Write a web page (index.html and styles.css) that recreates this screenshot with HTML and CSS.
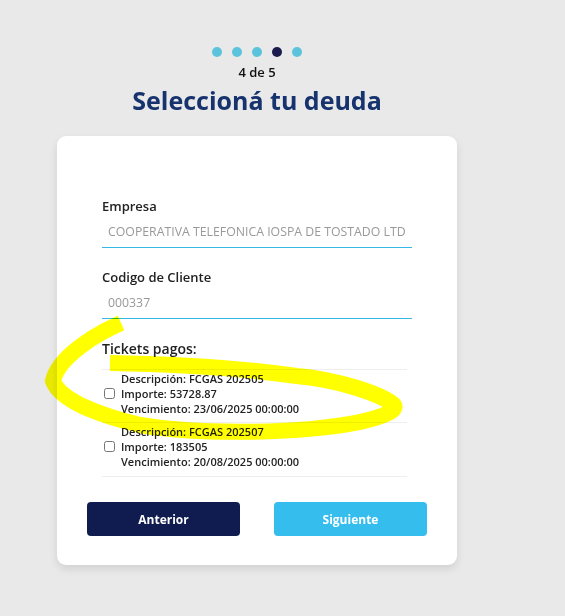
FILE: index.html
```html
<!DOCTYPE html>
<html lang="es">

<head>
  <title>Seleccioná tu deuda</title>
  <link rel="stylesheet" href="styles.css">
</head>

<body>
  <div class="wizard">
    <div class="steps">
      <span class="dot"></span>
      <span class="dot"></span>
      <span class="dot"></span>
      <span class="dot current"></span>
      <span class="dot"></span>
    </div>
    <div class="step-count">4 de 5</div>
    <h1 class="title">Seleccioná tu deuda</h1>

    <div class="card">
      <label class="field">
        <span class="field-label">Empresa</span>
        <input class="field-input" type="text" value="COOPERATIVA TELEFONICA IOSPA DE TOSTADO LTDA" readonly>
      </label>
      <label class="field">
        <span class="field-label">Codigo de Cliente</span>
        <input class="field-input" type="text" value="000337" readonly>
      </label>

      <div class="tickets">
        <div class="tickets-title">Tickets pagos:</div>
        <label class="ticket">
          <input type="checkbox">
          <span class="ticket-info">
            <span>Descripción: FCGAS 202505</span>
            <span>Importe: 53728.87</span>
            <span>Vencimiento: 23/06/2025 00:00:00</span>
          </span>
        </label>
        <label class="ticket">
          <input type="checkbox">
          <span class="ticket-info">
            <span>Descripción: FCGAS 202507</span>
            <span>Importe: 183505</span>
            <span>Vencimiento: 20/08/2025 00:00:00</span>
          </span>
        </label>
      </div>

      <div class="actions">
        <button class="btn btn-back">Anterior</button>
        <button class="btn btn-next">Siguiente</button>
      </div>
    </div>
  </div>

  <!-- highlighter mark drawn over the screenshot -->
  <svg class="highlight" width="565" height="616" viewBox="0 0 565 616">
    <path d="M121,323 C96,334 58,357 53,381 C60,400 98,415 140,425 C200,435 300,434 360,422 C386,416 399,410 393,404 C380,394 340,380 297,376 C240,368 170,364 110,363" />
  </svg>
</body>

</html>
```

FILE: styles.css
```css
html,
body {
  margin: 0;
  height: 100%;
  overflow: hidden;
  background: #e9e9e9;
}

body {
  font-family: "Open Sans", sans-serif;
}

.wizard {
  width: 514px;
  display: flex;
  flex-direction: column;
  align-items: center;
  padding-top: 47px;
}

.steps {
  display: flex;
  gap: 10px;
}

.dot {
  width: 10px;
  height: 10px;
  border-radius: 50%;
  background: #5bc3dc;
}

.dot.current {
  background: #1b1b4f;
}

.step-count {
  margin-top: 6px;
  font-size: 13px;
  font-weight: 600;
  color: #111;
  line-height: 18px;
}

.title {
  margin: 4px 0 0;
  font-size: 25px;
  font-weight: 700;
  color: #17336e;
  line-height: 30px;
}

.card {
  margin-top: 21px;
  width: 310px;
  padding: 61px 45px 29px;
  background: white;
  border-radius: 9px;
  box-shadow: 0 4px 8px #0000001a;
}

.field {
  display: flex;
  flex-direction: column;
  margin-bottom: 20px;
}

.field-label {
  font-size: 13px;
  font-weight: 600;
  color: #222;
  line-height: 18px;
}

.field-input {
  border: none;
  border-bottom: 1px solid #35b8e6;
  padding: 8px 6px 6px;
  font-family: "Open Sans", sans-serif;
  font-size: 12.3px;
  line-height: 18px;
  color: #999;
  outline: none;
  background: transparent;
}

.tickets-title {
  font-size: 14px;
  font-weight: 600;
  color: #222;
  line-height: 20px;
  padding-bottom: 10px;
  margin-right: 5px;
  border-bottom: 1px solid #eee;
}

.ticket {
  display: flex;
  align-items: center;
  padding: 1px 0 6px;
  margin-right: 5px;
  border-bottom: 1px solid #eee;
  font-size: 11px;
  line-height: 15px;
  color: #222;
}

.ticket:last-child {
  padding-bottom: 7px;
}

.ticket input {
  width: 11px;
  height: 11px;
  margin: 0 6px 0 2px;
}

.ticket-info {
  display: flex;
  flex-direction: column;
  font-weight: 600;
}

.actions {
  display: flex;
  justify-content: space-between;
  margin: 25px -15px 0;
}

.btn {
  width: 153px;
  height: 34px;
  border: none;
  border-radius: 4px;
  color: white;
  font-family: "Open Sans", sans-serif;
  font-size: 12px;
  font-weight: 700;
}

.btn-back {
  background: #101c4f;
}

.btn-next {
  background: #35bdee;
}

.highlight {
  position: absolute;
  left: 0;
  top: 0;
  pointer-events: none;
  mix-blend-mode: multiply;
}

.highlight path {
  fill: none;
  stroke: #ffff00;
  stroke-width: 16;
}
```
